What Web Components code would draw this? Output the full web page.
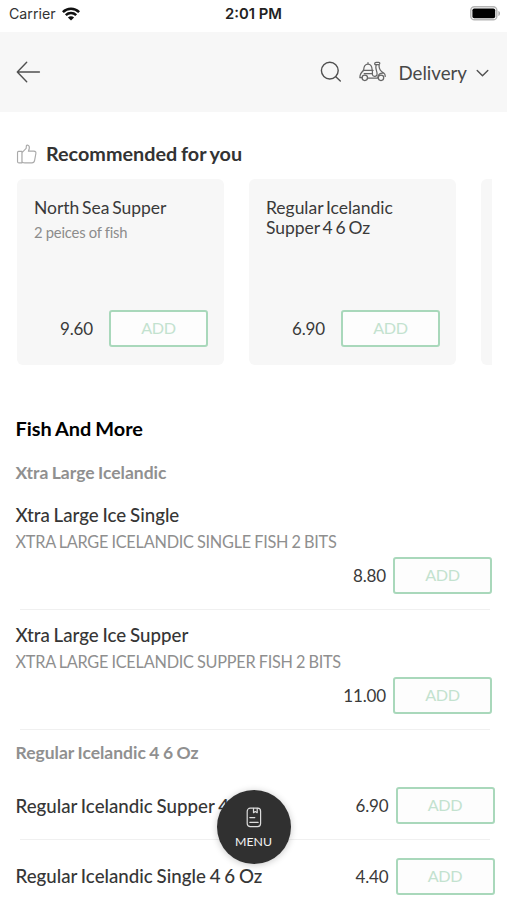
<!DOCTYPE html>
<html lang="en">
<head>
<meta charset="utf-8">
<title>Menu</title>
<style>
  html, body { margin: 0; height: 100%; }
  body { background: #fff; overflow: hidden; font-family: Lato, "Liberation Sans", sans-serif; color: #333; }
</style>
</head>
<body>
<food-app></food-app>
<script>
const define = (name, html) => {
  const template = document.createElement('template');
  template.innerHTML = html;
  customElements.define(name, class extends HTMLElement {
    constructor() {
      super();
      this.attachShadow({ mode: 'open' }).append(template.content.cloneNode(true));
    }
  });
};

define('status-bar', `
<style>
  :host { display: grid; grid-template-columns: 1fr auto 1fr; align-items: center; height: 32px; box-sizing: border-box; padding: 0 7px 4px 9px; font: 400 14.2px/28px Inter, "Liberation Sans", sans-serif; color: #333; }
  .left { display: flex; align-items: center; gap: 6px; }
  .left svg { margin-top: -1px; }
  .time { font-weight: 600; font-size: 14.8px; color: #222; margin-right: 2px; }
  .battery { justify-self: end; margin-top: -1px; }
  svg { display: block; }
</style>
<div class="left"><span>Carrier</span>
<svg width="18" height="14" viewBox="0 0 18 14" fill="none" stroke="#111" stroke-width="2.6"><path d="M.9 5.1C5.5.7 12.5.7 17.1 5.1M3.8 8.1c3-2.8 7.4-2.8 10.4 0"/><path d="M9 13.6 5.9 10.4c1.8-1.6 4.4-1.6 6.2 0z" fill="#111" stroke="none"/></svg></div>
<span class="time">2:01 PM</span>
<svg class="battery" width="30" height="15" viewBox="0 0 30 15"><rect x=".8" y=".8" width="26" height="13" rx="3.6" fill="#fff" stroke="#b5b5b5" stroke-width="1.5"/><rect x="2.4" y="2.4" width="22.8" height="9.8" rx="1.8" fill="#000"/><path d="M28.4 5v5c2.2-.8 2.2-4.2 0-5z" fill="#aaa"/></svg>`);

define('top-bar', `
<style>
  :host { display: flex; align-items: center; height: 80px; box-sizing: border-box; padding: 0 18px 0 16px; background: #f7f7f7; font-size: 18.7px; line-height: 26px; color: #484848; }
  .back { margin-right: auto; }
  .scooter { margin: 0 12px 0 17px; }
  .chev { margin: 2px 0 0 9px; }
  span { padding-top: 1px; }
  svg { display: block; fill: none; stroke: #505050; stroke-width: 1.4; stroke-linecap: round; stroke-linejoin: round; }
</style>
<svg class="back" width="26" height="24" viewBox="0 0 26 24"><path d="M23.4 12H1.5M10.7 2.3 1.3 12l9.4 9.7"/></svg>
<svg width="22" height="24" viewBox="0 0 22 24"><circle cx="9.8" cy="10.6" r="8.4"/><path d="m15.8 16.8 4.5 4.2"/></svg>
<svg class="scooter" width="27" height="22" viewBox="0 0 27 22"><g stroke="#666" stroke-width="1.25"><path d="M4.6 9.2C4.8 5.3 6.6 3.2 9 3.2s4 2.1 4.2 6M9 3.1V1.7M4 9.4h10M5.2 12.5h8M4.6 9.5c-2.5 1.9-3.8 4-3.7 7.2h2.2M13.4 9.5v4.2c.5 2.2 3.6 2.3 4.5.2.7-1.7-.6-4.1-.9-6.2-.3-1.7-.2-2.6.3-3.9M15.9 3.5c-.6-1.5.3-2.2 1.5-2.2h2.3c1.5 0 1.4 2.2-.2 2.4l-3.6-.2M20.2 3.8c-.7 3.8 1 6.1 4.5 8.3 1.1.8 1.6 2 1.5 3.3M18.8 16.8c.1-3.2 2.5-5.2 5.7-4.6M8.5 17h10.2"/><circle cx="5.8" cy="16.8" r="2.7"/><circle cx="22" cy="16.8" r="2.7"/></g></svg>
<span>Delivery</span>
<svg class="chev" width="13" height="12" viewBox="0 0 13 12"><path d="m1.2 3.5 5.3 5.2 5.3-5.2"/></svg>`);

define('add-button', `
<style>
  :host { display: block; width: 99px; height: 37px; box-sizing: border-box; border: 2px solid #a9d8bb; border-radius: 3px; background: #fdfdfd; color: #c3e2cf; font-size: 16.2px; line-height: 32px; letter-spacing: -.3px; text-align: center; }
</style><slot></slot>`);

define('dish-card', `
<style>
  :host { display: flex; flex: none; flex-direction: column; width: 207px; height: 186px; box-sizing: border-box; padding: 19px 16px 18px 17px; border-radius: 6px; background: #f7f7f7; }
  .name { font-size: 17.5px; line-height: 20px; letter-spacing: -.03px; word-spacing: -1.6px; color: #3a3a3a; white-space: pre-line; }
  .note { margin-top: 4px; font-size: 14.8px; line-height: 20px; letter-spacing: -.17px; word-spacing: -.4px; color: #8c8c8c; }
  .buy { display: flex; justify-content: flex-end; align-items: center; gap: 16px; margin-top: auto; font-size: 17px; letter-spacing: -.15px; color: #3a3a3a; }
</style>
<div class="name"><slot name="name"></slot></div>
<div class="note"><slot name="note"></slot></div>
<div class="buy"><slot name="price"></slot><add-button>ADD</add-button></div>`);

// Blank edge of the next card in the carousel.
define('card-peek', `
<style>
  :host { display: block; flex: 1; height: 186px; border-radius: 6px 0 0 6px; background: #f7f7f7; }
</style>`);

define('dish-row', `
<style>
  :host { display: block; height: 120px; box-sizing: border-box; padding: 15px 15px 0 16px; }
  .name { font-size: 18.7px; font-weight: 500; line-height: 22px; word-spacing: -.9px; margin-left: -.5px; color: #363636; }
  .note { margin-top: 5px; font-size: 16.3px; line-height: 22px; letter-spacing: -.24px; word-spacing: -.7px; color: #8f8f8f; white-space: nowrap; margin-left: -.5px; }
  .buy { display: flex; justify-content: flex-end; align-items: center; gap: 7px; margin-top: 4px; font-size: 17px; letter-spacing: -.15px; color: #3a3a3a; }
  .line { height: 1px; margin: 15px 2px 0 4px; background: #f0f0f0; }
  :host([compact]) { display: grid; grid-template-columns: 1fr auto; grid-template-rows: 37px auto; align-items: center; height: 70.5px; padding: 17px 12.5px 0 16px; }
  :host([compact]) .note { display: none; }
  :host([compact]) .buy { margin: 0; }
  :host([compact]) .line { grid-column: 1 / -1; align-self: start; margin: 15px 5px 0 4px; }
</style>
<div class="name"><slot name="name"></slot></div>
<div class="note"><slot name="note"></slot></div>
<div class="buy"><slot name="price"></slot><add-button>ADD</add-button></div>
<div class="line"></div>`);

define('menu-fab', `
<style>
  :host { position: absolute; left: 217px; top: 790px; width: 74px; height: 74px; box-sizing: border-box; padding-top: 17px; border-radius: 50%; display: flex; flex-direction: column; align-items: center; gap: 6px; background: #303030; color: #f4f4f4; box-shadow: 0 1px 7px rgba(0,0,0,.22); font-size: 12.3px; line-height: 16px; }
  svg { display: block; fill: none; stroke: #ddd; stroke-width: 1.2; stroke-linecap: round; stroke-linejoin: round; margin-right: 1px; }
  span { margin-right: 1px; }
</style>
<svg width="16" height="21" viewBox="0 0 16 21"><rect x="1.2" y="1.2" width="13.4" height="18.4" rx="3"/><path d="M7.5 1.4v4.3l1.8-1.2 1.9 1.2V1.4M3.8 10.6h5M3.8 15.3h8.4"/></svg>
<span>MENU</span>`);

define('food-app', `
<style>
  :host { display: block; width: 507px; height: 900px; overflow: hidden; position: relative; }
  .rec { display: flex; align-items: center; gap: 9px; height: 24px; margin: 30px 0 0 16px; font-size: 19.8px; font-weight: 700; word-spacing: -1px; }
  .rec span { margin-top: -2px; }
  .rec svg { display: block; fill: none; stroke: #aaa; stroke-width: 1.2; stroke-linejoin: round; }
  .cards { display: flex; gap: 25px; margin: 13px 15px 0 17px; }
  h2 { margin: 51px 0 0 15.5px; font-size: 19.9px; font-weight: 700; line-height: 24px; word-spacing: -.9px; color: #000; }
  h3 { margin: 21px 0 0 15.5px; font-size: 17.5px; font-weight: 700; line-height: 24px; word-spacing: -.8px; color: #909090; }
  .first { margin-bottom: 4px; }
  .second { margin: 12px 0 5px 15.5px; }
</style>
<status-bar></status-bar>
<top-bar></top-bar>
<div class="rec"><svg width="21" height="22" viewBox="0 0 22 22"><path d="M2.6 8.3h3.6v12H3.1c-1 0-1.5-.6-1.5-1.5V9.7c0-.9.3-1.4 1-1.4zM6.3 9.5l4.3-4.3.3-3c.1-.9 2-.7 2.7.4.9 1.4.3 3.4-.6 5.4h5.6c2 0 2.5 1.1 2.2 2.7l-1.3 7c-.3 1.7-1.2 2.6-2.8 2.6H9.3c-1.5 0-2.1-.4-3-1z"/></svg><span>Recommended for you</span></div>
<div class="cards">
  <dish-card><span slot="name">North Sea Supper</span><span slot="note">2 peices of fish</span><span slot="price">9.60</span></dish-card>
  <dish-card><span slot="name">Regular Icelandic
Supper 4 6 Oz</span><span slot="price">6.90</span></dish-card>
  <card-peek></card-peek>
</div>
<h2>Fish And More</h2>
<h3 class="first">Xtra Large Icelandic</h3>
<dish-row><span slot="name">Xtra Large Ice Single</span><span slot="note">XTRA LARGE ICELANDIC SINGLE FISH 2 BITS</span><span slot="price">8.80</span></dish-row>
<dish-row><span slot="name">Xtra Large Ice Supper</span><span slot="note">XTRA LARGE ICELANDIC SUPPER FISH 2 BITS</span><span slot="price">11.00</span></dish-row>
<h3 class="second">Regular Icelandic 4 6 Oz</h3>
<dish-row compact><span slot="name">Regular Icelandic Supper 4 6 Oz</span><span slot="price">6.90</span></dish-row>
<dish-row compact><span slot="name">Regular Icelandic Single 4 6 Oz</span><span slot="price">4.40</span></dish-row>
<menu-fab></menu-fab>`);
</script>
</body>
</html>
